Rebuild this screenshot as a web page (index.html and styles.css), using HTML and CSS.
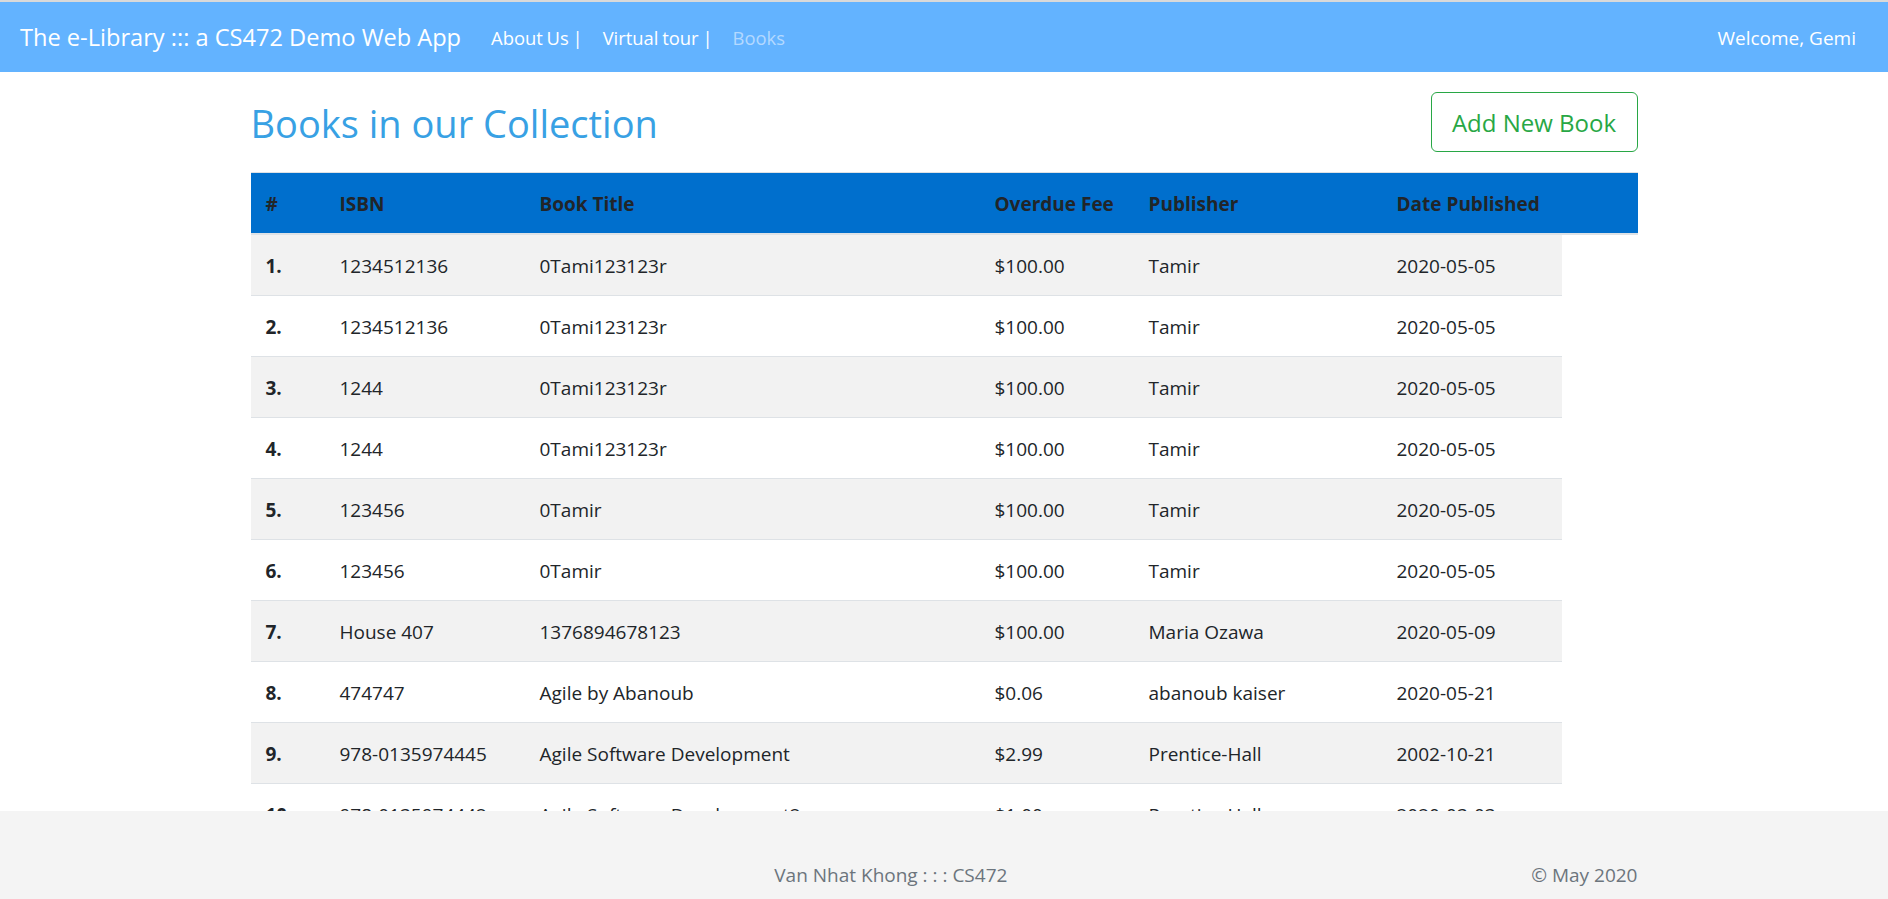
FILE: index.html
```html
<!DOCTYPE html>
<html lang="en">
<head>
<meta charset="utf-8">
<title>Books</title>
<link rel="stylesheet" href="styles.css">
</head>
<body>
<nav class="navbar">
  <a class="brand" href="#">The e-Library ::: a CS472 Demo Web App</a>
  <ul class="nav-links">
    <li><a href="#">About Us |</a></li>
    <li><a href="#">Virtual tour |</a></li>
    <li><a href="#" class="muted">Books</a></li>
  </ul>
  <span class="welcome">Welcome, Gemi</span>
</nav>

<main class="container">
  <div class="page-head">
    <h2 class="page-title">Books in our Collection</h2>
    <a class="btn-add" href="#">Add New Book</a>
  </div>

  <div class="table">
    <div class="row head">
      <div>#</div><div>ISBN</div><div>Book Title</div><div>Overdue Fee</div><div>Publisher</div><div>Date Published</div>
    </div>
    <div class="row odd"><div class="num">1.</div><div>1234512136</div><div>0Tami123123r</div><div>$100.00</div><div>Tamir</div><div>2020-05-05</div></div>
    <div class="row"><div class="num">2.</div><div>1234512136</div><div>0Tami123123r</div><div>$100.00</div><div>Tamir</div><div>2020-05-05</div></div>
    <div class="row odd"><div class="num">3.</div><div>1244</div><div>0Tami123123r</div><div>$100.00</div><div>Tamir</div><div>2020-05-05</div></div>
    <div class="row"><div class="num">4.</div><div>1244</div><div>0Tami123123r</div><div>$100.00</div><div>Tamir</div><div>2020-05-05</div></div>
    <div class="row odd"><div class="num">5.</div><div>123456</div><div>0Tamir</div><div>$100.00</div><div>Tamir</div><div>2020-05-05</div></div>
    <div class="row"><div class="num">6.</div><div>123456</div><div>0Tamir</div><div>$100.00</div><div>Tamir</div><div>2020-05-05</div></div>
    <div class="row odd"><div class="num">7.</div><div>House 407</div><div>1376894678123</div><div>$100.00</div><div>Maria Ozawa</div><div>2020-05-09</div></div>
    <div class="row"><div class="num">8.</div><div>474747</div><div>Agile by Abanoub</div><div>$0.06</div><div>abanoub kaiser</div><div>2020-05-21</div></div>
    <div class="row odd"><div class="num">9.</div><div>978-0135974445</div><div>Agile Software Development</div><div>$2.99</div><div>Prentice-Hall</div><div>2002-10-21</div></div>
    <div class="row"><div class="num">10.</div><div>978-0135974442</div><div>Agile Software Development2</div><div>$1.00</div><div>Prentice-Hall</div><div>2020-03-03</div></div>
  </div>
</main>

<footer class="footer">
  <div class="footer-inner">
    <span class="footer-center">Van Nhat Khong : : : CS472</span>
    <span class="footer-right">&copy; May 2020</span>
  </div>
</footer>
</body>
</html>
```
FILE: styles.css
```css
* { box-sizing: border-box; }
html, body { margin: 0; padding: 0; }
body {
  font-family: "Open Sans", "Noto Sans", "Liberation Sans", sans-serif;
  font-size: 19px;
  line-height: 1.5;
  color: #212529;
  background: #fff;
  border-top: 2px solid #d9d9d9;
}
a { text-decoration: none; }

.navbar {
  display: flex;
  align-items: center;
  height: 70px;
  padding: 2px 20px 0;
  background: #63b3ff;
}
.brand {
  color: #fff;
  font-size: 23.6px;
  margin-right: 20px;
  white-space: nowrap;
}
.nav-links {
  display: flex;
  list-style: none;
  margin: 0;
  padding: 0;
  flex: 1;
}
.nav-links a {
  display: block;
  padding: 10px;
  color: #fff;
  font-size: 18.4px;
  word-spacing: -1px;
}
.nav-links a.muted { color: #b3d9ff; }
.welcome {
  color: #fff;
  padding-right: 12px;
}

.container {
  width: 1387px;
  margin: 0 auto;
  padding-bottom: 100px;
}
.page-head {
  display: flex;
  justify-content: space-between;
  align-items: center;
  margin-top: 20px;
  margin-bottom: 20px;
}
.page-title {
  margin: 0;
  padding-top: 3px;
  font-weight: 400;
  font-size: 38px;
  line-height: 1.2;
  color: #38a1e4;
}
.btn-add {
  display: block;
  width: 207px;
  height: 60px;
  line-height: 59px;
  text-align: center;
  border: 1.25px solid #28a745;
  border-radius: 6px;
  color: #28a745;
  font-size: 24px;
}

.table {
  display: flex;
  flex-direction: column;
  border-top: 1px solid #dee2e6;
}
.row {
  display: grid;
  grid-template-columns: 74px 200px 455px 154px 248px 180px;
  width: 1311px;
  border-top: 1px solid #dee2e6;
}
.row > div {
  padding: 16px 15px 14px;
  line-height: 30px;
  white-space: nowrap;
}
.row.head {
  width: 100%;
  background: #006fcd;
  font-weight: 700;
  border-top: none;
  border-bottom: 2px solid #dee2e6;
}
.row.head + .row { border-top: none; }
.row.odd { background: #f2f2f2; }
.num { font-weight: 700; }

.footer {
  position: fixed;
  left: 0;
  right: 0;
  bottom: 0;
  height: 88px;
  background: #f4f4f4;
  color: #6c757d;
}
.footer-inner {
  width: 1387px;
  margin: 0 auto;
  padding-top: 49px;
  display: grid;
  grid-template-columns: 1fr auto;
  line-height: 30px;
  white-space: nowrap;
}
.footer-center { text-align: center; }
.footer-right { text-align: right; }
```
